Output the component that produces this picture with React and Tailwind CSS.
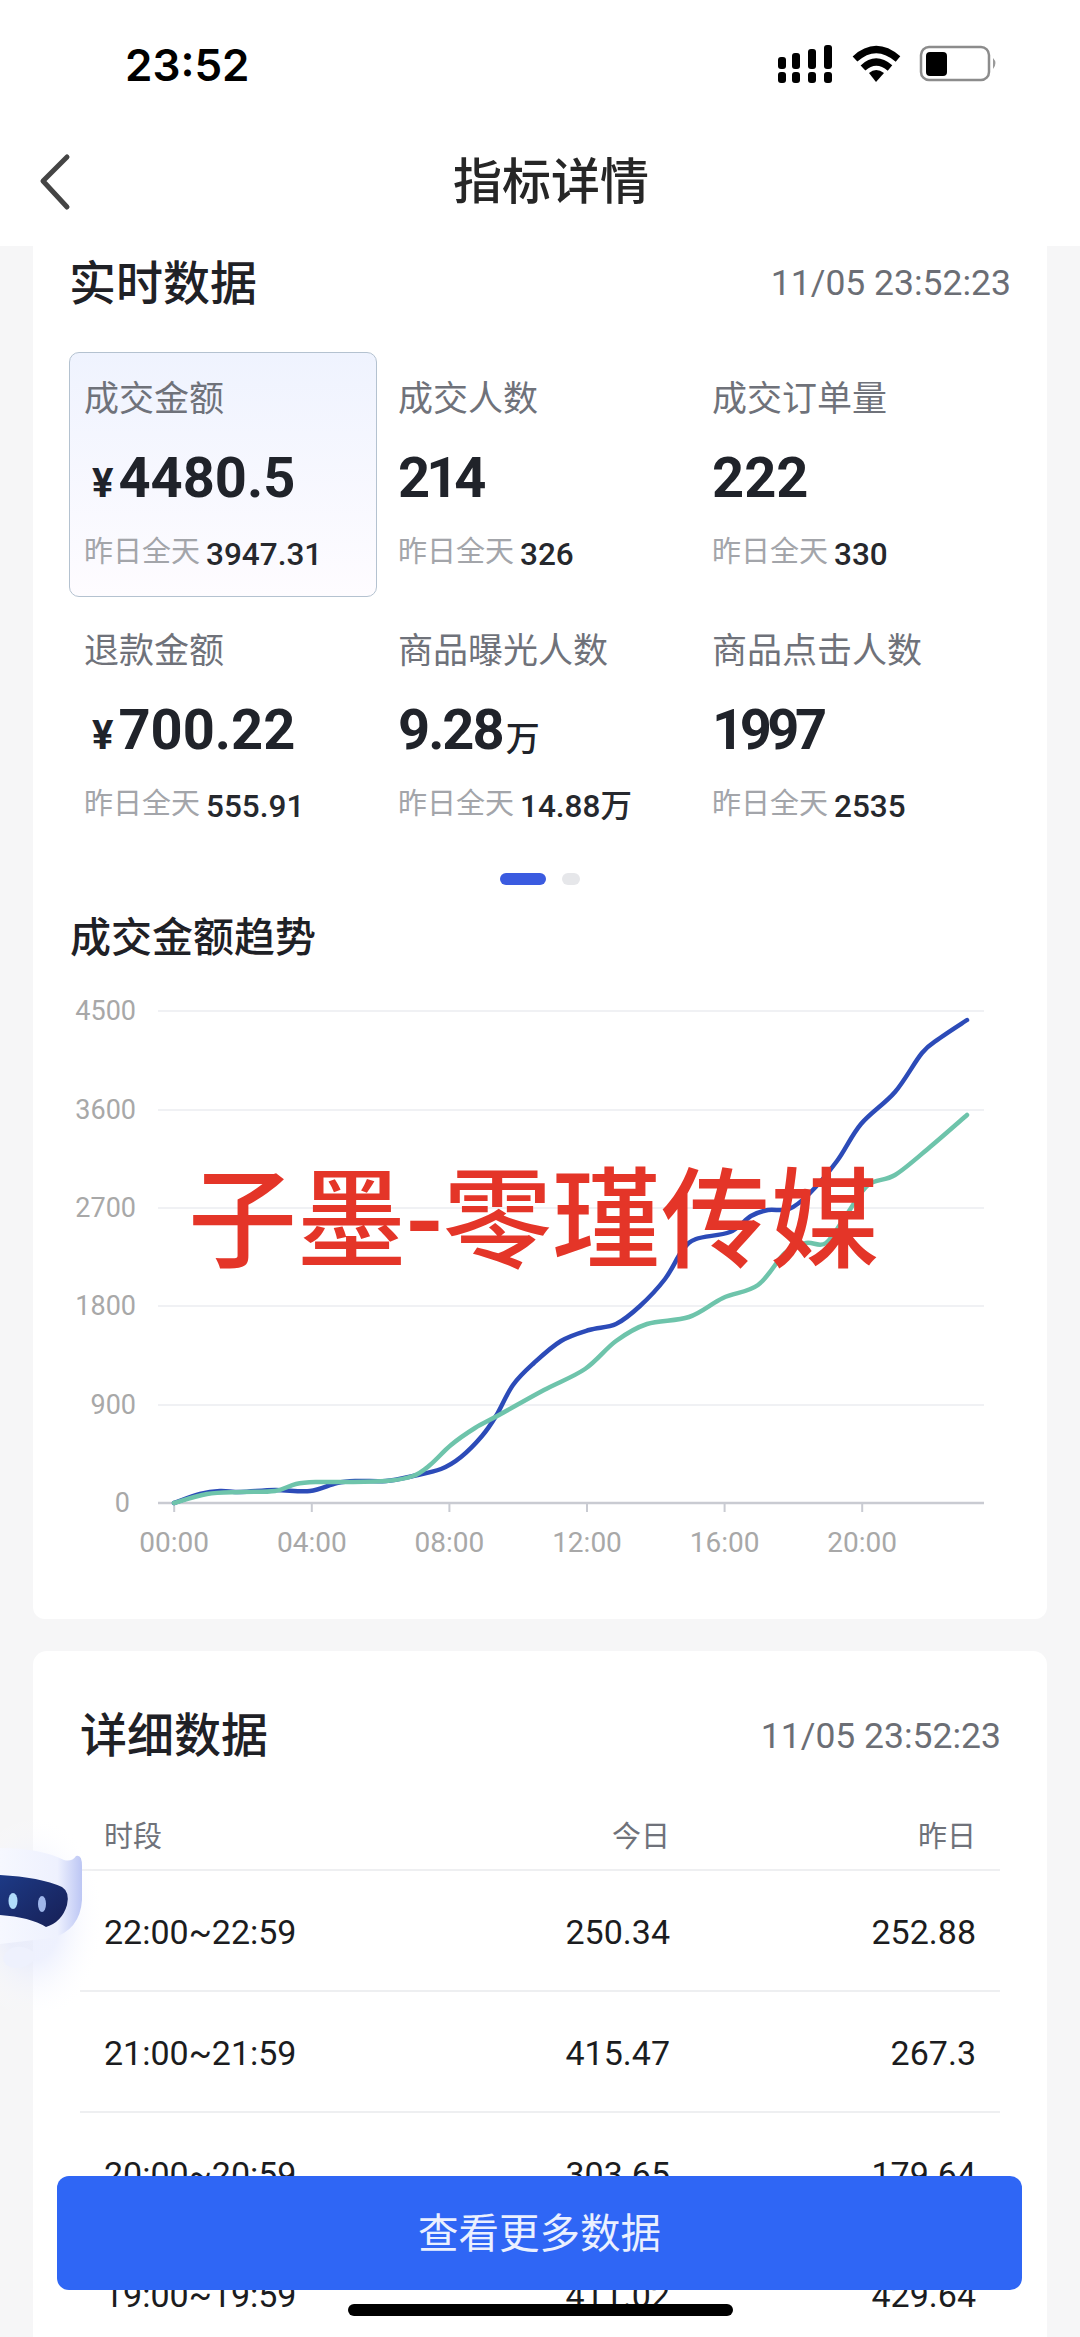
const metrics = [
  { label: '成交金额', value: '4480.5', yen: true, prev: '3947.31', active: true },
  { label: '成交人数', value: '214', tight: 'tracking-[-4px]', prev: '326' },
  { label: '成交订单量', value: '222', prev: '330' },
  { label: '退款金额', value: '700.22', yen: true, prev: '555.91' },
  { label: '商品曝光人数', value: '9.28', tight: 'tracking-[-2px]', unit: '万', prev: '14.88', prevUnit: '万' },
  { label: '商品点击人数', value: '1997', tight: 'tracking-[-4.5px]', prev: '2535' },
];

const rows = [
  ['22:00~22:59', '250.34', '252.88'],
  ['21:00~21:59', '415.47', '267.3'],
  ['20:00~20:59', '303.65', '179.64'],
  ['19:00~19:59', '411.02', '429.64'],
];

// curve points, read off the reference
const bluePts = [[174,1502],[200,1493],[220,1490],[241,1491],[275,1489],[310,1490],[337,1482],[358,1480],[386,1480],[413,1475],[441,1468],[461,1456],[482,1435],[496,1415],[513,1384],[534,1362],[561,1340],[589,1329],[616,1323],[640,1305],[665,1278],[682,1250],[696,1238],[730,1231],[751,1215],[768,1209],[789,1208],[809,1193],[837,1160],[861,1123],[895,1091],[922,1052],[940,1037],[967,1019]];
const greenPts = [[174,1502],[207,1493],[241,1491],[275,1490],[296,1483],[317,1481],[344,1481],[386,1480],[413,1475],[430,1464],[451,1444],[475,1427],[499,1414],[544,1389],[585,1368],[616,1340],[647,1323],[689,1316],[723,1297],[758,1284],[785,1252],[806,1242],[826,1242],[847,1213],[868,1184],[895,1174],[930,1146],[967,1114]];

function smooth(pts) {
  let d = `M${pts[0][0]} ${pts[0][1]}`;
  for (let i = 0; i < pts.length - 1; i++) {
    const p0 = pts[i - 1] || pts[i];
    const p1 = pts[i];
    const p2 = pts[i + 1];
    const p3 = pts[i + 2] || p2;
    d += ` C${p1[0] + (p2[0] - p0[0]) / 6} ${p1[1] + (p2[1] - p0[1]) / 6} ${p2[0] - (p3[0] - p1[0]) / 6} ${p2[1] - (p3[1] - p1[1]) / 6} ${p2[0]} ${p2[1]}`;
  }
  return d;
}

function StatusBar() {
  return (
    <div className="h-[130px] relative">
      <span className="absolute left-[125px] top-[40px] text-[44px] leading-[50px] font-semibold text-black font-['Inter',sans-serif]">23:52</span>
      <svg className="absolute left-[770px] top-[40px]" width="235" height="50" viewBox="770 40 235 50">
        <g fill="#000">
          <rect x="778" y="72" width="8" height="11" rx="3" />
          <rect x="792" y="72" width="8" height="11" rx="3" />
          <rect x="808" y="72" width="8" height="11" rx="3" />
          <rect x="824" y="72" width="8" height="11" rx="3" />
          <rect x="778" y="57" width="8" height="12" rx="3" />
          <rect x="792" y="53" width="8" height="16" rx="3" />
          <rect x="808" y="49" width="8" height="20" rx="3" />
          <rect x="824" y="45" width="8" height="24" rx="3" />
        </g>
        <g fill="none" stroke="#000" strokeWidth="7">
          <path d="M855 59 Q876 40 898 59" />
          <path d="M863 68 Q876 56 890 68" />
        </g>
        <path d="M869 73 Q876 67 884 73 L876 82 Z" fill="#000" />
        <rect x="921" y="47" width="68" height="33" rx="8" fill="none" stroke="#8c8c8c" strokeWidth="2.5" />
        <rect x="926" y="52" width="21" height="24" rx="4" fill="#000" />
        <path d="M993 58 Q998 63 993 69 Z" fill="#9a9a9a" />
      </svg>
    </div>
  );
}

function Header() {
  return (
    <div className="h-[116px] relative bg-white flex items-center justify-center pb-[11px] pl-[22px]">
      <svg className="absolute left-[36px] top-[22px]" width="40" height="60" viewBox="0 0 40 60">
        <path d="M31 5 L7 29 L31 55" fill="none" stroke="#444" strokeWidth="5" strokeLinecap="round" strokeLinejoin="round" />
      </svg>
      <h1 className="text-[49px] leading-[60px] font-medium text-[#262626]">指标详情</h1>
    </div>
  );
}

function MetricCell({ m }) {
  return (
    <div className={m.active
      ? 'w-[308px] h-[245px] pl-[14px] pt-[26px] rounded-[10px] border-[1.5px] border-[#b4c2d0] bg-gradient-to-b from-[#eff3fe] to-[#fefcff]'
      : 'w-[308px] h-[245px] pl-[15px] pt-[27px]'}>
      <div className="h-[42px] leading-[42px] text-[35px] text-[#6f727a]">{m.label}</div>
      <div className="h-[64px] mt-[25px] flex items-baseline text-[#20232a] font-bold leading-[64px]">
        {m.yen && <span className="text-[40px] ml-[8px] mr-[5px]">¥</span>}
        <span className={`text-[56px] ${m.tight || ''}`}>{m.value}</span>
        {m.unit && <span className="text-[34px] font-medium ml-[3px] translate-y-[2px]">{m.unit}</span>}
      </div>
      <div className="h-[40px] mt-[22px] flex items-baseline leading-[40px]">
        <span className="text-[29px] text-[#a3a5aa]">昨日全天</span>
        <span className="text-[31.5px] font-medium text-[#26282d] ml-[6px] translate-y-[3px]">{m.prev}{m.prevUnit}</span>
      </div>
    </div>
  );
}

function TrendChart() {
  const grid = [[4500, 1010], [3600, 1109], [2700, 1207], [1800, 1305], [900, 1404]];
  const ticks = ['00:00', '04:00', '08:00', '12:00', '16:00', '20:00'];
  return (
    <div className="relative h-[640px] w-[1013px] -ml-[36px]">
      <svg className="block" width="1013" height="640" viewBox="33 962 1013 640">
        {grid.map(([v, y]) => (
          <g key={v}>
            <line x1="158" x2="984" y1={y} y2={y} stroke="#f0f1f4" strokeWidth="2" />
            <text x="136" y={y + 9} textAnchor="end" fontSize="27" fill="#a8a8a8" fontFamily="Roboto">{v}</text>
          </g>
        ))}
        <text x="130" y="1511" textAnchor="end" fontSize="27" fill="#a8a8a8" fontFamily="Roboto">0</text>
        <line x1="158" x2="984" y1="1502" y2="1502" stroke="#c9cbd2" strokeWidth="2.5" />
        {ticks.map((t, i) => (
          <g key={t}>
            <line x1={174.2 + i * 137.6} x2={174.2 + i * 137.6} y1="1502" y2="1511" stroke="#c9cbd2" strokeWidth="2" />
            <text x={174.2 + i * 137.6} y="1551" textAnchor="middle" fontSize="28" fill="#a8a8a8" fontFamily="Roboto">{t}</text>
          </g>
        ))}
        <path d={smooth(bluePts)} fill="none" stroke="#2c4bb8" strokeWidth="4.5" strokeLinecap="round" />
        <path d={smooth(greenPts)} fill="none" stroke="#6ec4ab" strokeWidth="4.5" strokeLinecap="round" />
      </svg>
      <div className="absolute left-[155px] top-[195px] text-[109px] leading-[128px] font-medium text-[#e43528] whitespace-nowrap">子墨-零瑾传媒</div>
    </div>
  );
}

function Robot() {
  return (
    <svg className="absolute left-0 top-[1820px]" width="130" height="190" viewBox="0 1820 130 190">
      <defs>
        <radialGradient id="glow" cx="0.25" cy="0.52" r="0.55">
          <stop offset="0.4" stopColor="#e3e8fd" stopOpacity="0.6" />
          <stop offset="1" stopColor="#ffffff" stopOpacity="0" />
        </radialGradient>
        <linearGradient id="head" x1="0" y1="0" x2="1" y2="0">
          <stop offset="0" stopColor="#f6f8ff" />
          <stop offset="0.7" stopColor="#eef1fe" />
          <stop offset="1" stopColor="#bcc6f4" />
        </linearGradient>
        <linearGradient id="visor" x1="0" y1="0" x2="1" y2="1">
          <stop offset="0" stopColor="#1d3a86" />
          <stop offset="1" stopColor="#171f55" />
        </linearGradient>
      </defs>
      <rect x="0" y="1820" width="130" height="190" fill="url(#glow)" />
      <path d="M0 1848 Q40 1848 64 1860 Q72 1862 76 1856 Q82 1854 82 1866 L82 1900 Q80 1930 52 1938 L0 1944 Z" fill="url(#head)" />
      <path d="M0 1875 Q40 1877 62 1887 Q70 1892 67 1905 Q62 1922 46 1927 Q30 1917 0 1915 Z" fill="url(#visor)" />
      <ellipse cx="13" cy="1901" rx="4.5" ry="8" fill="#b0dcfb" />
      <ellipse cx="42" cy="1904" rx="4" ry="8" fill="#9fb6ea" />
      <path d="M3 1958 Q8 1945 22 1947 Q36 1950 35 1958 Q30 1968 14 1968 Q4 1966 3 1958 Z" fill="#eef1fd" />
    </svg>
  );
}

export default function App() {
  return (
    <div className="relative w-[1080px] h-[2337px] overflow-hidden bg-[#f6f6f7] font-['Roboto','Noto_Sans_CJK_SC',sans-serif]">
      <div className="bg-white">
        <StatusBar />
        <Header />
      </div>

      <div className="mx-[33px]">
        {/* realtime card */}
        <div className="h-[1373px] bg-white rounded-b-[12px] px-[36px]">
          <div className="h-[74px] pt-[2px] flex items-center justify-between">
            <h2 className="text-[47px] font-medium text-[#1f2126]">实时数据</h2>
            <span className="text-[35.5px] text-[#6b6e75]">11/05 23:52:23</span>
          </div>
          <div className="mt-[32px] grid grid-cols-[314px_314px_314px] gap-y-[7px]">
            {metrics.map((m) => <MetricCell key={m.label} m={m} />)}
          </div>
          <div className="mt-[24px] flex justify-center gap-[16px] h-[12px]">
            <div className="w-[46px] h-[12px] rounded-full bg-[#3b5be0]" />
            <div className="w-[18px] h-[12px] rounded-full bg-[#e6e7ea]" />
          </div>
          <h2 className="mt-[28px] h-[50px] leading-[50px] text-[41px] font-medium text-[#1f2126] ml-[1px]">成交金额趋势</h2>
          <TrendChart />
        </div>

        {/* detail card */}
        <div className="mt-[32px] h-[800px] bg-white rounded-t-[14px] px-[47px]">
          <div className="pt-[55px] h-[150px] flex items-start justify-between -mr-[1px]">
            <h2 className="text-[47px] leading-[60px] font-medium text-[#1f2126]">详细数据</h2>
            <span className="text-[35.5px] leading-[60px] text-[#6b6e75]">11/05 23:52:23</span>
          </div>
          <div className="h-[70px] pt-[6px] flex items-center border-b-2 border-[#eeeff1] text-[29px] text-[#6f727a] pl-[24px] pr-[24px]">
            <span className="flex-1">时段</span>
            <span className="text-right">今日</span>
            <span className="w-[306px] text-right">昨日</span>
          </div>
          {rows.map((r) => (
            <div key={r[0]} className="h-[121px] pt-[4px] flex items-center border-b-2 border-[#eeeff1] text-[34px] text-[#1b1c20] pl-[24px] pr-[24px]">
              <span className="flex-1">{r[0]}</span>
              <span className="text-right">{r[1]}</span>
              <span className="w-[306px] text-right">{r[2]}</span>
            </div>
          ))}
        </div>
      </div>

      <Robot />

      <div className="absolute left-[57px] top-[2176px] w-[965px] h-[114px] pt-[3px] rounded-[12px] bg-[#2f66f5] flex items-center justify-center text-[40.5px] text-[#eaf0ff]">查看更多数据</div>
      <div className="absolute left-[348px] top-[2304px] w-[385px] h-[12px] rounded-full bg-black" />
    </div>
  );
}
